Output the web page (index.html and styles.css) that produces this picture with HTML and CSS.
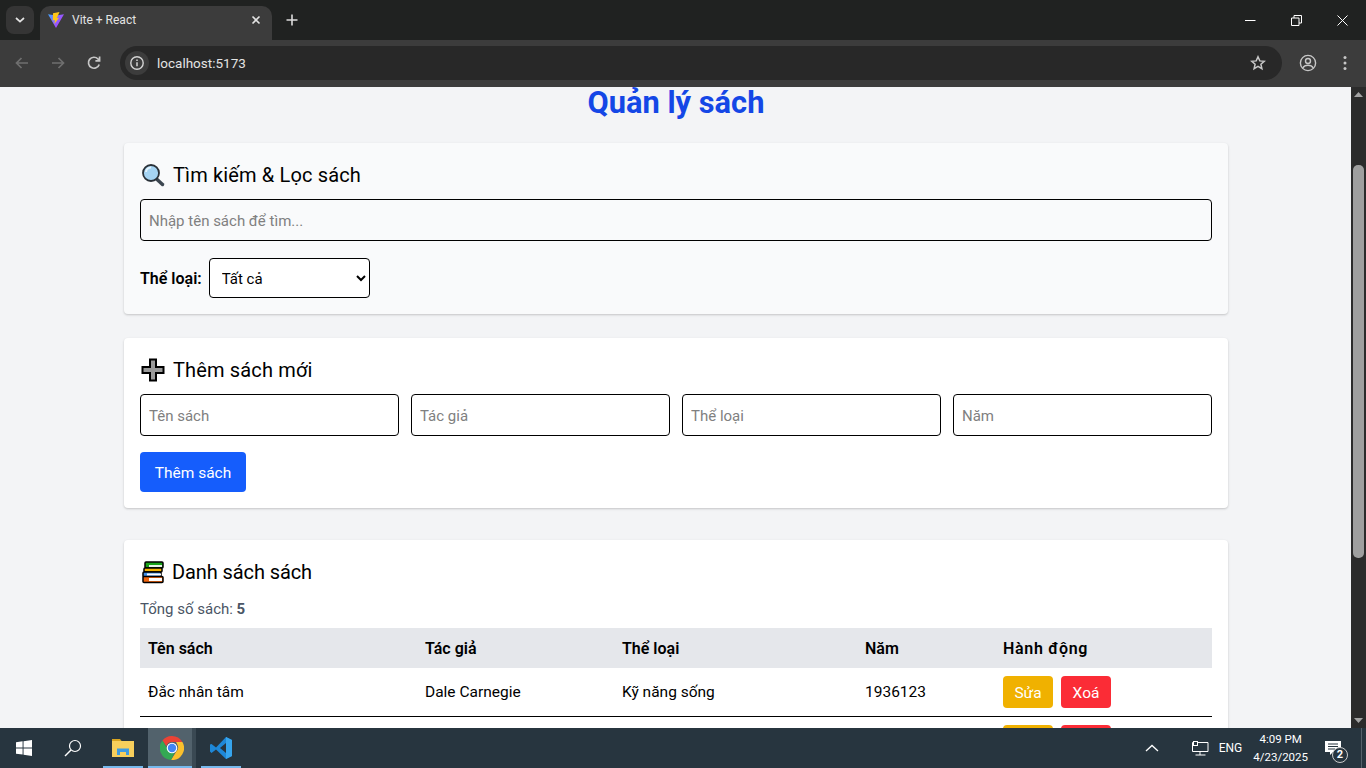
FILE: index.html
```html
<!DOCTYPE html>
<html lang="en">
  <head>
    <meta charset="UTF-8" />
    <meta name="viewport" content="width=device-width, initial-scale=1.0" />
    <title>Vite + React</title>
    <link rel="stylesheet" href="styles.css">
  </head>
  <body>
    <header class="tabstrip">
      <div class="tab-search">
        <svg width="10" height="6" viewBox="0 0 10 6"><path d="M1 1l4 3.6L9 1" fill="none" stroke="#e3e3e3" stroke-width="1.7"/></svg>
      </div>
      <div class="tab">
        <svg class="tab-logo" width="16" height="16" viewBox="0 0 16 16">
          <defs>
            <linearGradient id="viteA" x1="0" y1="0" x2="1" y2="0.6"><stop offset="0" stop-color="#41a5ff"/><stop offset="1" stop-color="#bd34fe"/></linearGradient>
          </defs>
          <path d="M0 2.2L8 16 16 2.2 8 3.6z" fill="url(#viteA)"/>
          <path d="M11.5 0L5 1.2 4.8 8.5 7 8 6.4 12 11 5.8 8.8 6.2z" fill="#ffc517"/>
        </svg>
        <span class="tab-title">Vite + React</span>
        <svg class="tab-close" width="10" height="10" viewBox="0 0 10 10"><path d="M1.5 1.5l7 7M8.5 1.5l-7 7" stroke="#e3e3e3" stroke-width="1.6"/></svg>
      </div>
      <svg class="new-tab" width="12" height="12" viewBox="0 0 12 12"><path d="M6 .5v11M.5 6h11" stroke="#dcdcdc" stroke-width="1.6"/></svg>
      <div class="window-btns">
        <svg width="11" height="11" viewBox="0 0 11 11"><path d="M0 5.5h10.5" stroke="#fff" stroke-width="1"/></svg>
        <svg width="11" height="11" viewBox="0 0 11 11"><path d="M.5 3h7.5v7.5H.5zM3 3V.5h7.5V8H8" fill="none" stroke="#fff"/></svg>
        <svg width="11" height="11" viewBox="0 0 11 11"><path d="M.5.5l10 10M10.5.5l-10 10" stroke="#fff"/></svg>
      </div>
    </header>

    <nav class="toolbar">
      <svg class="nav-icon" width="16" height="16" viewBox="0 0 16 16"><path d="M14 8H3M7.5 3L2.5 8l5 5" fill="none" stroke="#6f6f6f" stroke-width="1.7"/></svg>
      <svg class="nav-icon" width="16" height="16" viewBox="0 0 16 16"><path d="M2 8h11M8.5 3l5 5-5 5" fill="none" stroke="#6f6f6f" stroke-width="1.7"/></svg>
      <svg class="nav-icon" width="16" height="16" viewBox="0 0 16 16"><path d="M13.2 9.4A5.5 5.5 0 1 1 12 4l1.5 1.6M13.6 1.6v4.2H9.4" fill="none" stroke="#c7c7c7" stroke-width="1.7"/></svg>
      <div class="omnibox">
        <span class="site-info">
          <svg width="16" height="16" viewBox="0 0 16 16"><circle cx="8" cy="8" r="6.2" fill="none" stroke="#d4d4d4" stroke-width="1.4"/><path d="M8 7.2v4M8 4.4v1.5" stroke="#d4d4d4" stroke-width="1.5"/></svg>
        </span>
        <span class="url">localhost:5173</span>
        <svg class="star" width="16" height="16" viewBox="0 0 16 16"><path d="M8 1.8l1.8 4.1 4.4.4-3.3 2.9 1 4.4L8 11.3l-3.9 2.3 1-4.4-3.3-2.9 4.4-.4z" fill="none" stroke="#c7c7c7" stroke-width="1.5"/></svg>
      </div>
      <svg class="profile" width="18" height="18" viewBox="0 0 18 18"><circle cx="9" cy="9" r="7.6" fill="none" stroke="#c7c7c7" stroke-width="1.4"/><circle cx="9" cy="7" r="2.5" fill="none" stroke="#c7c7c7" stroke-width="1.4"/><path d="M3.8 14c1-2 3-2.8 5.2-2.8s4.2.8 5.2 2.8" fill="none" stroke="#c7c7c7" stroke-width="1.4"/></svg>
      <svg class="menu" width="4" height="16" viewBox="0 0 4 16"><circle cx="2" cy="2.5" r="1.5" fill="#c7c7c7"/><circle cx="2" cy="8" r="1.5" fill="#c7c7c7"/><circle cx="2" cy="13.5" r="1.5" fill="#c7c7c7"/></svg>
    </nav>

    <div class="viewport">
      <main class="page">
        <h1 class="page-title">Quản lý sách</h1>

        <section class="card card-muted">
          <h2 class="card-title"><span class="emoji">
            <svg width="24" height="24" viewBox="0 0 24 24"><path d="M14.5 15l7 6.5" stroke="#3c4650" stroke-width="3.5" stroke-linecap="round"/><circle cx="10" cy="10" r="8" fill="#a5d4f3" stroke="#2a3138" stroke-width="1.8"/><path d="M5 9a5 5 0 0 1 5-4.5" fill="none" stroke="#e3f3fd" stroke-width="2"/></svg>
          </span>Tìm kiếm &amp; Lọc sách</h2>
          <input class="field field-wide" type="text" placeholder="Nhập tên sách để tìm..." />
          <div class="filter-row">
            <label class="filter-label" for="category">Thể loại:</label>
            <select class="filter-select" id="category">
              <option>Tất cả</option>
            </select>
          </div>
        </section>

        <section class="card card-add">
          <h2 class="card-title"><span class="emoji">
            <svg width="24" height="24" viewBox="0 0 24 24"><path d="M9 1.5h6V9h7.5v6H15v7.5H9V15H1.5V9H9z" fill="#9a9a9a" stroke="#000" stroke-width="2"/></svg>
          </span>Thêm sách mới</h2>
          <div class="add-grid">
            <input class="field" type="text" placeholder="Tên sách" />
            <input class="field" type="text" placeholder="Tác giả" />
            <input class="field" type="text" placeholder="Thể loại" />
            <input class="field" type="text" placeholder="Năm" />
          </div>
          <button class="btn btn-add">Thêm sách</button>
        </section>

        <section class="card card-list">
          <h2 class="card-title card-title-list"><span class="emoji">
            <svg width="24" height="24" viewBox="0 0 24 24"><rect x="4" y="2" width="18" height="6" rx="1" fill="#18a218" stroke="#000" stroke-width="1.5"/><rect x="8" y="5" width="13" height="2" fill="#e8f5e8"/><rect x="3" y="8" width="18" height="4" rx="1" fill="#f4b400" stroke="#000" stroke-width="1.5"/><rect x="2" y="12" width="18" height="5" rx="1" fill="#3f8fe6" stroke="#000" stroke-width="1.5"/><rect x="6" y="13.5" width="14" height="2" fill="#fff"/><rect x="2" y="16.5" width="20" height="6" rx="1" fill="#f0650e" stroke="#000" stroke-width="1.5"/><rect x="8" y="18" width="13" height="3" fill="#fff"/></svg>
          </span>Danh sách sách</h2>
          <p class="total">Tổng số sách: <strong>5</strong></p>
          <table class="book-table">
            <thead>
              <tr>
                <th class="col-name">Tên sách</th>
                <th class="col-author">Tác giả</th>
                <th class="col-cat">Thể loại</th>
                <th class="col-year">Năm</th>
                <th class="col-actions">Hành động</th>
              </tr>
            </thead>
            <tbody>
              <tr>
                <td>Đắc nhân tâm</td>
                <td>Dale Carnegie</td>
                <td>Kỹ năng sống</td>
                <td>1936123</td>
                <td class="actions"><button class="btn btn-edit">Sửa</button><button class="btn btn-del">Xoá</button></td>
              </tr>
              <tr>
                <td>Nhà giả kim</td>
                <td>Paulo Coelho</td>
                <td>Tiểu thuyết</td>
                <td>1988</td>
                <td class="actions"><button class="btn btn-edit">Sửa</button><button class="btn btn-del">Xoá</button></td>
              </tr>
            </tbody>
          </table>
        </section>
      </main>

      <div class="scrollbar">
        <svg width="9" height="5" viewBox="0 0 9 5"><path d="M0 5L4.5 0 9 5z" fill="#a3a3a3"/></svg>
        <div class="scroll-track"><div class="scroll-thumb"></div></div>
        <svg width="9" height="5" viewBox="0 0 9 5"><path d="M0 0L4.5 5 9 0z" fill="#a3a3a3"/></svg>
      </div>
    </div>

    <footer class="taskbar">
      <div class="task-slot slot-win">
        <svg width="16" height="16" viewBox="0 0 17 17"><path d="M0 2.4L7 1.4v6.5H0zM8 1.2L17 0v7.9H8zM0 9h7v6.5l-7-1zM8 9h9v8l-9-1.3z" fill="#fff"/></svg>
      </div>
      <div class="task-slot slot-search">
        <svg width="18" height="18" viewBox="0 0 18 18"><circle cx="11" cy="7" r="5.5" fill="none" stroke="#fff" stroke-width="1.2"/><path d="M7 11l-6 6" stroke="#fff" stroke-width="1.4"/></svg>
      </div>
      <div class="task-slot slot-app task-open">
        <svg width="22" height="20" viewBox="0 0 22 20"><path d="M0 1h8l2 2.5H0z" fill="#d9a520"/><rect y="3" width="22" height="16" fill="#f7cf5c"/><path d="M5 17v-6.5h12V17h-3v-3H8v3z" fill="#3f9be0"/></svg>
      </div>
      <div class="task-slot task-active">
        <svg width="24" height="24" viewBox="0 0 24 24">
          <path d="M12 0a12 12 0 0 1 10.4 6H12a6 6 0 0 0-5.7 4.2L2.5 4.4A12 12 0 0 1 12 0z" fill="#ea4335"/>
          <path d="M22.4 6A12 12 0 0 1 11 24l5.3-8.5A6 6 0 0 0 17 8 6 6 0 0 0 16 6z" fill="#fbc02d"/>
          <path d="M2.5 4.4l5 8.6a6 6 0 0 0 7 3.7L11 24A12 12 0 0 1 2.500 4.400z" fill="#34a853"/>
          <circle cx="12" cy="12" r="5.3" fill="#fff"/><circle cx="12" cy="12" r="4.2" fill="#4285f4"/>
        </svg>
      </div>
      <div class="task-slot slot-app task-open">
        <svg width="24" height="24" viewBox="0 0 24 24"><path d="M17 1l6 3v16l-6 3-10-9.5-4.5 3.5L1 15.500v-7L2.500 8 7 11.500zM17 7l-6 5 6 5z" fill="#1e88d8"/><path d="M17 1l6 3v16l-6 3z" fill="#36a5ee"/></svg>
      </div>
      <div class="tray">
        <svg class="tray-chevron" width="14" height="8" viewBox="0 0 14 8"><path d="M1 7l6-5.5L13 7" fill="none" stroke="#fff" stroke-width="1.3"/></svg>
        <svg class="tray-net" width="17" height="15" viewBox="0 0 17 15"><path d="M.5 1.5h15.500v9H.5zM8 10.500v3.500M3.500 14h10" fill="none" stroke="#fff"/><rect x="1.500" y=".5" width="4" height="4" fill="#27353f" stroke="#fff"/></svg>
        <span class="tray-lang">ENG</span>
        <div class="clock"><span>4:09 PM</span><span>4/23/2025</span></div>
        <div class="notify">
          <svg width="16" height="15" viewBox="0 0 16 15"><path d="M0 0h16v11H8l-3 3v-3H0z" fill="#fff"/><path d="M3 3h10M3 5.500h10M3 8h7" stroke="#27353f"/></svg>
          <span class="notify-count">2</span>
        </div>
      </div>
    </footer>
  </body>
</html>
```

FILE: styles.css
```css
* {
  margin: 0;
  padding: 0;
  box-sizing: border-box;
}
html,
body {
  height: 100%;
  overflow: hidden;
}
body {
  font-family: Roboto, "Noto Sans", Arial, sans-serif;
  display: flex;
  flex-direction: column;
  background-color: #f3f4f6;
  color: #000;
}

/* browser chrome */
.tabstrip {
  height: 40px;
  flex: none;
  display: flex;
  align-items: flex-end;
  background-color: #202221;
  padding-left: 6px;
}
.tab-search {
  width: 28px;
  height: 28px;
  margin-bottom: 6px;
  border-radius: 8px;
  background-color: #353535;
  display: flex;
  align-items: center;
  justify-content: center;
}
.tab {
  width: 232px;
  height: 34px;
  margin-left: 6px;
  border-radius: 10px 10px 0 0;
  background-color: #3c3c3c;
  display: flex;
  align-items: center;
  padding: 0 11px 6px 8px;
  color: #e3e3e3;
}
.tab-title {
  flex: 1;
  margin-left: 8px;
  font-size: 12px;
}
.new-tab {
  margin: 0 0 14px 14px;
}
.window-btns {
  margin-left: auto;
  height: 40px;
  display: flex;
  align-items: center;
  gap: 35px;
  padding-right: 18px;
}
.toolbar {
  height: 47px;
  flex: none;
  display: flex;
  align-items: center;
  background-color: #3c3c3c;
  padding: 0 14px 1px 14px;
}
.nav-icon {
  margin-right: 20px;
}
.omnibox {
  width: 1162px;
  height: 34px;
  margin-left: -2px;
  border-radius: 17px;
  background-color: #282828;
  display: flex;
  align-items: center;
  padding: 0 16px 0 5px;
}
.site-info {
  width: 24px;
  height: 24px;
  border-radius: 12px;
  background-color: #3c3c3c;
  display: flex;
  align-items: center;
  justify-content: center;
}
.url {
  flex: 1;
  margin-left: 8px;
  font-size: 13.5px;
  color: #e3e3e3;
}
.profile {
  margin-left: 17px;
}
.menu {
  margin-left: 26px;
}

/* page */
.viewport {
  flex: 1;
  display: flex;
  min-height: 0;
}
.page {
  flex: 1;
  overflow: hidden;
  padding: 0 123px 0 124px;
}
.page-title {
  font-size: 30.8px;
  font-weight: 700;
  line-height: 32px;
  text-align: center;
  color: #1447e6;
  margin-bottom: 24px;
}
.card {
  background-color: #fff;
  border-radius: 4px;
  box-shadow: 0 1px 3px rgba(0, 0, 0, 0.1), 0 1px 2px rgba(0, 0, 0, 0.1);
  padding: 16px;
}
.card-muted {
  background-color: #f9fafb;
  margin-bottom: 24px;
}
.card-add {
  margin-bottom: 32px;
}
.card-title {
  display: flex;
  align-items: center;
  font-size: 20px;
  font-weight: 400;
  letter-spacing: 0.15px;
  line-height: 28px;
  padding-top: 2px;
  margin-bottom: 10px;
}
.emoji {
  width: 26px;
  margin-left: 1px;
  margin-right: 6px;
  display: flex;
}
.field {
  height: 42px;
  border: 1px solid #000;
  border-radius: 4px;
  padding: 1px 8px 0;
  font-family: inherit;
  font-size: 15px;
  background-color: transparent;
  width: 100%;
}
.field::placeholder {
  color: #808080;
}
.filter-row {
  display: flex;
  align-items: center;
  margin-top: 17px;
}
.filter-label {
  font-size: 16px;
  font-weight: 600;
  margin-right: 7px;
}
.filter-select {
  width: 161px;
  height: 40px;
  border: 1px solid #000;
  border-radius: 4px;
  padding: 1px 8px 0;
  font-family: inherit;
  font-size: 15px;
  background-color: #fff;
  color: #000;
}
.add-grid {
  display: grid;
  grid-template-columns: repeat(4, 1fr);
  gap: 12px;
  margin-bottom: 16px;
}
.btn {
  border: none;
  border-radius: 4px;
  color: #fff;
  font-family: inherit;
  font-size: 15.5px;
  padding-top: 1px;
  cursor: pointer;
}
.btn-add {
  height: 40px;
  width: 106px;
  background-color: #155dfc;
}
.card-title-list {
  letter-spacing: -0.1px;
  margin-bottom: 11px;
}
.card-title-list .emoji {
  margin-right: 5px;
}
.total {
  font-size: 15px;
  line-height: 24px;
  color: #4a5565;
  margin-bottom: 7px;
}
.book-table {
  width: 100%;
  border-collapse: separate;
  border-spacing: 0;
  font-size: 15.5px;
}
.book-table th {
  height: 40px;
  background-color: #e5e7eb;
  text-align: left;
  font-size: 16px;
  font-weight: 600;
  padding: 0 8px;
}
.book-table td {
  height: 49px;
  padding: 0 8px;
  border-bottom: 1px solid #000;
}
.col-name {
  width: 277px;
}
.col-author {
  width: 197px;
}
.col-cat {
  width: 243px;
}
.col-year {
  width: 138px;
}
.book-table .col-actions {
  letter-spacing: 0.7px;
}
.btn-edit,
.btn-del {
  width: 50px;
  height: 32px;
  vertical-align: middle;
}
.btn-edit {
  background-color: #f0b100;
  margin-right: 8px;
}
.btn-del {
  background-color: #fb2c36;
}
.scrollbar {
  width: 15px;
  flex: none;
  background-color: #2b2b2b;
  display: flex;
  flex-direction: column;
  align-items: center;
  padding: 5px 0;
}
.scroll-track {
  flex: 1;
  width: 100%;
  padding: 68px 2px 160px;
}
.scroll-thumb {
  height: 100%;
  background-color: #9f9f9f;
  border-radius: 5px;
}

/* windows taskbar */
.taskbar {
  height: 40px;
  flex: none;
  display: flex;
  align-items: stretch;
  background-color: #27353f;
  color: #fff;
}
.task-slot {
  width: 48px;
  display: flex;
  align-items: center;
  justify-content: center;
  position: relative;
}
.slot-search,
.slot-app {
  width: 50px;
}
.task-open::after,
.task-active::after {
  content: "";
  position: absolute;
  left: 5px;
  right: 5px;
  bottom: 0;
  height: 2px;
  background-color: #76b9ed;
}
.task-active {
  background-image: linear-gradient(to right, #52626c 44px, #3a4953 44px);
}
.task-active::after {
  left: 0;
  right: 4px;
}
.tray {
  margin-left: auto;
  margin-right: 4px;
  display: flex;
  align-items: center;
  font-size: 12px;
  border-right: 1px solid #55626b;
}
.tray-chevron {
  margin-right: 33px;
}
.tray-net {
  margin-right: 10px;
}
.tray-lang {
  margin-right: 11px;
}
.clock {
  display: flex;
  flex-direction: column;
  align-items: center;
  font-size: 11.5px;
  line-height: 18px;
  margin-right: 17px;
}
.notify {
  width: 36px;
  height: 30px;
  position: relative;
  padding-top: 8px;
}
.notify-count {
  position: absolute;
  left: 7px;
  top: 14px;
  width: 16px;
  height: 16px;
  border: 1px solid #ccc;
  border-radius: 8px;
  background-color: #27353f;
  font-size: 11px;
  font-weight: 700;
  line-height: 14px;
  text-align: center;
}
```
